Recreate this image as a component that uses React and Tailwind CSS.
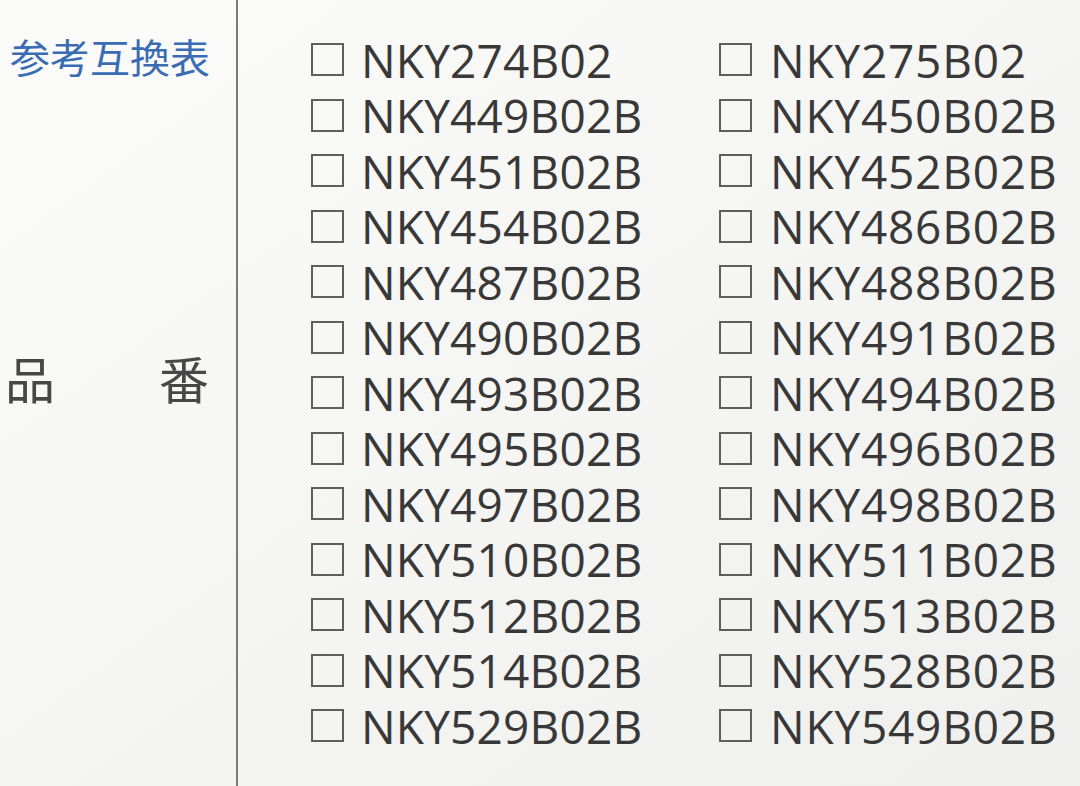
const rows = [
  ['NKY274B02', 'NKY275B02'],
  ['NKY449B02B', 'NKY450B02B'],
  ['NKY451B02B', 'NKY452B02B'],
  ['NKY454B02B', 'NKY486B02B'],
  ['NKY487B02B', 'NKY488B02B'],
  ['NKY490B02B', 'NKY491B02B'],
  ['NKY493B02B', 'NKY494B02B'],
  ['NKY495B02B', 'NKY496B02B'],
  ['NKY497B02B', 'NKY498B02B'],
  ['NKY510B02B', 'NKY511B02B'],
  ['NKY512B02B', 'NKY513B02B'],
  ['NKY514B02B', 'NKY528B02B'],
  ['NKY529B02B', 'NKY549B02B'],
];

function Item({ code, wide }) {
  return (
    <div className="flex items-center h-[55.5px]">
      <div className="w-[33px] h-[33px] border-2 border-[#5e5e5e] shrink-0" />
      <span
        className={
          wide
            ? 'ml-[18px] text-[46px] leading-[54px] tracking-[0.8px] text-[#383838]'
            : 'ml-[17px] text-[46px] leading-[54px] tracking-[0.2px] text-[#383838]'
        }
      >
        {code}
      </span>
    </div>
  );
}

export default function App() {
  return (
    <div
      className="w-[1080px] h-[786px] overflow-hidden flex bg-gradient-to-br from-[#fbfbfa] to-[#efefed]"
      style={{ fontFamily: '"Open Sans", "Noto Sans CJK JP", sans-serif' }}
    >
      {/* Label column */}
      <aside className="w-[238px] shrink-0 border-r-2 border-[#7a7a7a]">
        <h1
          className="pt-[30px] pl-[10px] text-[40px] leading-[52px] text-[#3a6cb3]"
          style={{ fontFamily: '"Noto Sans CJK JP", sans-serif' }}
        >
          参考互換表
        </h1>
        <div
          className="mt-[266px] flex justify-between pl-[5px] pr-[27px] text-[50px] leading-[58px] text-[#474747]"
          style={{ fontFamily: '"Noto Sans CJK JP", sans-serif' }}
        >
          <span>品</span>
          <span>番</span>
        </div>
      </aside>

      {/* Part numbers */}
      <main className="pt-[32px] pl-[73px] grid grid-cols-[408px_1fr] content-start">
        {rows.map(([a, b]) => (
          <div key={a} className="contents">
            <Item code={a} />
            <Item code={b} wide />
          </div>
        ))}
      </main>
    </div>
  );
}
